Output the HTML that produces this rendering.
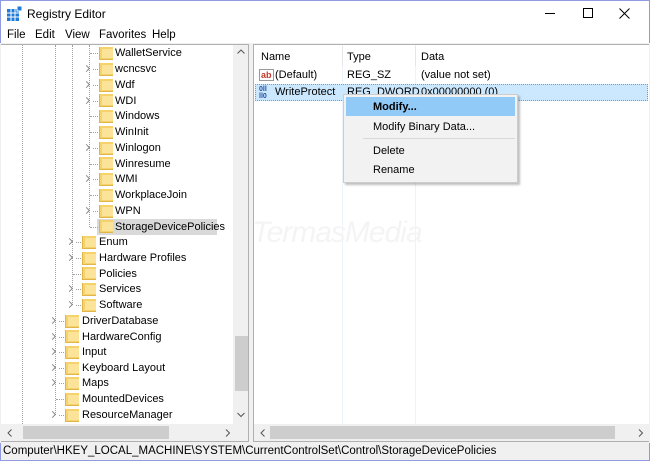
<!DOCTYPE html>
<html><head><meta charset="utf-8"><style>
*{margin:0;padding:0;box-sizing:border-box}
body{width:650px;height:461px;overflow:hidden;background:#fff;font-family:"Liberation Sans",sans-serif;font-size:11px;color:#000;position:relative}
.a{position:absolute}
.win{left:0;top:0;width:650px;height:461px;border:1px solid #8f9ae0}
.t{position:absolute;white-space:nowrap;line-height:16px}
.f{position:absolute;width:14px;height:13px;background:#f6d26b;border-left:1px solid #e0b54a;border-bottom:1px solid #e0b54a}
.f:after{content:"";position:absolute;left:2px;top:2px;width:11px;height:9px;background:#fbe39a}
.ch{position:absolute;width:5px;height:5px;border-right:1px solid #888;border-top:1px solid #888;transform:rotate(45deg);margin-top:5px}
.dh{position:absolute;height:1px;border-top:1px dotted #a0a0a0}
.dv{position:absolute;width:1px;border-left:1px dotted #a0a0a0}
</style></head><body>
<div class="a win"></div>
<svg class="a" style="left:7px;top:6px" width="16" height="16"><rect x="0" y="3" width="12" height="12" fill="#1e7bd6"/><g stroke="#fff" stroke-width="1"><line x1="4" y1="3" x2="4" y2="15"/><line x1="8" y1="3" x2="8" y2="15"/><line x1="0" y1="7" x2="12" y2="7"/><line x1="0" y1="11" x2="12" y2="11"/></g><rect x="10" y="0" width="5" height="5" fill="#1e7bd6" stroke="#fff"/></svg>
<div class="t" style="left:27px;top:6px;font-size:12px">Registry Editor</div>
<div class="a" style="left:545px;top:13px;width:10px;height:1px;background:#000"></div>
<div class="a" style="left:583px;top:8px;width:10px;height:10px;border:1px solid #000"></div>
<svg class="a" style="left:619px;top:8px" width="11" height="11"><path d="M0.5 0.5L10.5 10.5M10.5 0.5L0.5 10.5" stroke="#000" stroke-width="1"/></svg>
<div class="t" style="left:7px;top:27px;font-size:11.5px">File</div>
<div class="t" style="left:35px;top:27px;font-size:11.5px">Edit</div>
<div class="t" style="left:65px;top:27px;font-size:11.5px">View</div>
<div class="t" style="left:99px;top:27px;font-size:11.5px">Favorites</div>
<div class="t" style="left:152px;top:27px;font-size:11.5px">Help</div>
<div class="a" style="left:0;top:43px;width:650px;height:400px;background:#f0f0f0"></div>
<div class="a" style="left:1px;top:44px;width:248px;height:398px;background:#fff;border:1px solid #b0b0b0;border-left:none"></div>
<div class="a" style="left:253px;top:44px;width:396px;height:398px;background:#fff;border:1px solid #b0b0b0;border-right:none"></div>
<div class="a" style="left:233px;top:45px;width:15px;height:379px;background:#f0f0f0"></div>
<div class="a" style="left:235px;top:336px;width:13px;height:55px;background:#cdcdcd"></div>
<svg class="a" style="left:237px;top:49px" width="8" height="6"><path d="M0.5 4.5L4 1L7.5 4.5" fill="none" stroke="#555"/></svg>
<svg class="a" style="left:237px;top:412px" width="8" height="6"><path d="M0.5 1L4 4.5L7.5 1" fill="none" stroke="#555"/></svg>
<div class="a" style="left:1px;top:424px;width:247px;height:17px;background:#f0f0f0"></div>
<div class="a" style="left:23px;top:426px;width:146px;height:13px;background:#cdcdcd"></div>
<svg class="a" style="left:7px;top:429px" width="6" height="8"><path d="M4.5 0.5L1 4L4.5 7.5" fill="none" stroke="#555"/></svg>
<svg class="a" style="left:225px;top:429px" width="6" height="8"><path d="M1 0.5L4.5 4L1 7.5" fill="none" stroke="#555"/></svg>
<div class="dv" style="left:22px;top:45px;height:379px"></div>
<div class="dv" style="left:55px;top:45px;height:370px"></div>
<div class="dv" style="left:72px;top:45px;height:260px"></div>
<div class="dv" style="left:89px;top:45px;height:182px"></div>
<div class="a" style="left:97px;top:219px;width:120px;height:16px;background:#d9d9d9"></div>
<div class="a" style="left:0;top:0">
<div class="dh" style="left:90px;top:53px;width:8px"></div><div class="f" style="left:99px;top:47px"></div><div class="t" style="left:115px;top:45px">WalletService</div>
<div class="ch" style="left:84px;top:61px"></div><div class="dh" style="left:93px;top:69px;width:5px"></div><div class="f" style="left:99px;top:63px"></div><div class="t" style="left:115px;top:61px">wcncsvc</div>
<div class="ch" style="left:84px;top:77px"></div><div class="dh" style="left:93px;top:85px;width:5px"></div><div class="f" style="left:99px;top:79px"></div><div class="t" style="left:115px;top:77px">Wdf</div>
<div class="ch" style="left:84px;top:93px"></div><div class="dh" style="left:93px;top:101px;width:5px"></div><div class="f" style="left:99px;top:94px"></div><div class="t" style="left:115px;top:93px">WDI</div>
<div class="dh" style="left:90px;top:116px;width:8px"></div><div class="f" style="left:99px;top:110px"></div><div class="t" style="left:115px;top:108px">Windows</div>
<div class="dh" style="left:90px;top:132px;width:8px"></div><div class="f" style="left:99px;top:126px"></div><div class="t" style="left:115px;top:124px">WinInit</div>
<div class="ch" style="left:84px;top:140px"></div><div class="dh" style="left:93px;top:148px;width:5px"></div><div class="f" style="left:99px;top:142px"></div><div class="t" style="left:115px;top:140px">Winlogon</div>
<div class="dh" style="left:90px;top:164px;width:8px"></div><div class="f" style="left:99px;top:157px"></div><div class="t" style="left:115px;top:156px">Winresume</div>
<div class="ch" style="left:84px;top:171px"></div><div class="dh" style="left:93px;top:179px;width:5px"></div><div class="f" style="left:99px;top:173px"></div><div class="t" style="left:115px;top:171px">WMI</div>
<div class="dh" style="left:90px;top:195px;width:8px"></div><div class="f" style="left:99px;top:189px"></div><div class="t" style="left:115px;top:187px">WorkplaceJoin</div>
<div class="ch" style="left:84px;top:203px"></div><div class="dh" style="left:93px;top:211px;width:5px"></div><div class="f" style="left:99px;top:205px"></div><div class="t" style="left:115px;top:203px">WPN</div>
<div class="dh" style="left:90px;top:227px;width:8px"></div><div class="f" style="left:99px;top:220px"></div><div class="t" style="left:115px;top:219px">StorageDevicePolicies</div>
<div class="ch" style="left:67px;top:234px"></div><div class="dh" style="left:76px;top:242px;width:5px"></div><div class="f" style="left:82px;top:236px"></div><div class="t" style="left:99px;top:234px">Enum</div>
<div class="ch" style="left:67px;top:250px"></div><div class="dh" style="left:76px;top:258px;width:5px"></div><div class="f" style="left:82px;top:252px"></div><div class="t" style="left:99px;top:250px">Hardware Profiles</div>
<div class="dh" style="left:73px;top:274px;width:8px"></div><div class="f" style="left:82px;top:267px"></div><div class="t" style="left:99px;top:266px">Policies</div>
<div class="ch" style="left:67px;top:281px"></div><div class="dh" style="left:76px;top:289px;width:5px"></div><div class="f" style="left:82px;top:283px"></div><div class="t" style="left:99px;top:281px">Services</div>
<div class="ch" style="left:67px;top:297px"></div><div class="dh" style="left:76px;top:305px;width:5px"></div><div class="f" style="left:82px;top:299px"></div><div class="t" style="left:99px;top:297px">Software</div>
<div class="ch" style="left:50px;top:313px"></div><div class="dh" style="left:59px;top:321px;width:5px"></div><div class="f" style="left:65px;top:315px"></div><div class="t" style="left:82px;top:313px">DriverDatabase</div>
<div class="ch" style="left:50px;top:329px"></div><div class="dh" style="left:59px;top:337px;width:5px"></div><div class="f" style="left:65px;top:330px"></div><div class="t" style="left:82px;top:329px">HardwareConfig</div>
<div class="ch" style="left:50px;top:344px"></div><div class="dh" style="left:59px;top:352px;width:5px"></div><div class="f" style="left:65px;top:346px"></div><div class="t" style="left:82px;top:344px">Input</div>
<div class="ch" style="left:50px;top:360px"></div><div class="dh" style="left:59px;top:368px;width:5px"></div><div class="f" style="left:65px;top:362px"></div><div class="t" style="left:82px;top:360px">Keyboard Layout</div>
<div class="ch" style="left:50px;top:375px"></div><div class="dh" style="left:59px;top:383px;width:5px"></div><div class="f" style="left:65px;top:377px"></div><div class="t" style="left:82px;top:375px">Maps</div>
<div class="dh" style="left:56px;top:399px;width:8px"></div><div class="f" style="left:65px;top:393px"></div><div class="t" style="left:82px;top:391px">MountedDevices</div>
<div class="ch" style="left:50px;top:407px"></div><div class="dh" style="left:59px;top:415px;width:5px"></div><div class="f" style="left:65px;top:409px"></div><div class="t" style="left:82px;top:407px">ResourceManager</div>
</div>
<div class="a" style="left:342px;top:45px;width:1px;height:379px;background:#eef3fa"></div>
<div class="a" style="left:415px;top:45px;width:1px;height:379px;background:#eef3fa"></div>
<div class="a" style="left:342px;top:46px;width:1px;height:20px;background:#e5e5e5"></div>
<div class="a" style="left:415px;top:46px;width:1px;height:20px;background:#e5e5e5"></div>
<div class="t" style="left:261px;top:49px">Name</div>
<div class="t" style="left:347px;top:49px">Type</div>
<div class="t" style="left:421px;top:49px">Data</div>
<div class="t" style="left:259px;top:69px;font-size:9px;color:#c0392b;font-weight:bold;border:1px solid #999;line-height:10px;padding:0 1px">ab</div>
<div class="t" style="left:275px;top:67px">(Default)</div>
<div class="t" style="left:347px;top:67px">REG_SZ</div>
<div class="t" style="left:421px;top:67px">(value not set)</div>
<div class="a" style="left:255px;top:84px;width:393px;height:17px;background:#cce8ff;border:1px dotted #7a9ac0"></div>
<div class="t" style="left:259px;top:86px;font-size:7px;line-height:7px;color:#1e4f9a;font-weight:bold">0ll<br>ll0</div>
<div class="t" style="left:275px;top:84px">WriteProtect</div>
<div class="t" style="left:347px;top:84px">REG_DWORD</div>
<div class="t" style="left:421px;top:84px">0x00000000 (0)</div>
<div class="t" style="left:252px;top:216px;font-size:30px;color:#f4f4f4;line-height:34px;font-style:italic;letter-spacing:-1px">TermasMedia</div>
<div class="a" style="left:254px;top:424px;width:395px;height:17px;background:#f0f0f0"></div>
<div class="a" style="left:270px;top:426px;width:345px;height:13px;background:#cdcdcd"></div>
<svg class="a" style="left:260px;top:429px" width="6" height="8"><path d="M4.5 0.5L1 4L4.5 7.5" fill="none" stroke="#555"/></svg>
<svg class="a" style="left:638px;top:429px" width="6" height="8"><path d="M1 0.5L4.5 4L1 7.5" fill="none" stroke="#555"/></svg>
<div class="a" style="left:343px;top:94px;width:175px;height:89px;background:#f2f2f2;border:1px solid #ccc;box-shadow:2px 2px 2px rgba(0,0,0,.25)"></div>
<div class="a" style="left:346px;top:97px;width:169px;height:19px;background:#91c9f7"></div>
<div class="t" style="left:373px;top:99px;font-weight:bold">Modify...</div>
<div class="t" style="left:373px;top:119px">Modify Binary Data...</div>
<div class="a" style="left:363px;top:138px;width:152px;height:1px;background:#d7d7d7"></div>
<div class="t" style="left:373px;top:143px">Delete</div>
<div class="t" style="left:373px;top:162px">Rename</div>
<div class="a" style="left:1px;top:442px;width:648px;height:18px;background:#f0f0f0"></div>
<div class="t" style="left:3px;top:443px;font-size:11.5px">Computer\HKEY_LOCAL_MACHINE\SYSTEM\CurrentControlSet\Control\StorageDevicePolicies</div>
</body></html>
